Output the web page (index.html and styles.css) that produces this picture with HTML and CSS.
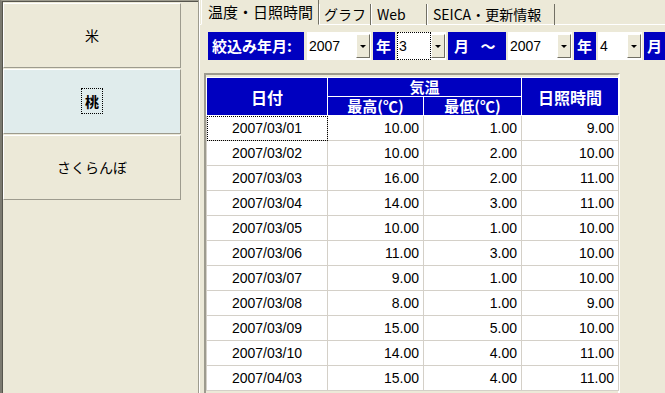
FILE: index.html
```html
<!DOCTYPE html>
<html lang="ja">
<head>
    <meta charset="utf-8">
    <link rel="stylesheet" href="styles.css">
</head>
<body>
<div class="app">
    <aside class="sidebar">
        <button class="crop">米</button>
        <button class="crop active"><span class="focus">桃</span></button>
        <button class="crop">さくらんぼ</button>
    </aside>

    <section class="main">
        <ul class="tabs">
            <li class="tab selected">温度・日照時間</li>
            <li class="tab">グラフ</li>
            <li class="tab">Web</li>
            <li class="tab">SEICA・更新情報</li>
        </ul>

        <div class="page">
            <div class="filter">
                <span class="label wide">絞込み年月:</span>
                <div class="combo w-year"><span class="value">2007</span><span class="drop"></span></div>
                <span class="label">年</span>
                <div class="combo w-month focused"><span class="value">3</span><span class="drop"></span></div>
                <span class="label tilde">月 ～</span>
                <div class="combo w-year"><span class="value">2007</span><span class="drop"></span></div>
                <span class="label">年</span>
                <div class="combo w-month2"><span class="value">4</span><span class="drop"></span></div>
                <span class="label">月</span>
            </div>

            <div class="grid-wrap">
                <table class="grid" id="weatherTable">
                    <colgroup>
                        <col class="c-date">
                        <col class="c-high">
                        <col class="c-low">
                        <col class="c-sun">
                    </colgroup>
                    <thead>
                    <tr>
                        <th rowspan="2" class="big">日付</th>
                        <th colspan="2" class="top">気温</th>
                        <th rowspan="2" class="big">日照時間</th>
                    </tr>
                    <tr>
                        <th class="sub">最高(℃)</th>
                        <th class="sub">最低(℃)</th>
                    </tr>
                    </thead>
                    <tbody>
                    <!-- rows are filled in below -->
                    </tbody>
                </table>
            </div>
        </div>
    </section>
</div>

<script>
    const rows = [
        ['2007/03/01', '10.00', '1.00', '9.00'],
        ['2007/03/02', '10.00', '2.00', '10.00'],
        ['2007/03/03', '16.00', '2.00', '11.00'],
        ['2007/03/04', '14.00', '3.00', '11.00'],
        ['2007/03/05', '10.00', '1.00', '10.00'],
        ['2007/03/06', '11.00', '3.00', '10.00'],
        ['2007/03/07', '9.00', '1.00', '10.00'],
        ['2007/03/08', '8.00', '1.00', '9.00'],
        ['2007/03/09', '15.00', '5.00', '10.00'],
        ['2007/03/10', '14.00', '4.00', '11.00'],
        ['2007/04/03', '15.00', '4.00', '11.00']
    ];

    const body = document.querySelector('#weatherTable tbody');
    rows.forEach((row, i) => {
        const tr = body.insertRow();
        row.forEach((value, j) => {
            const cell = tr.insertCell();
            cell.textContent = value;
            cell.className = j === 0 ? 'date' : 'num';
            if (i === 0 && j === 0) {
                cell.classList.add('current');
            }
        });
    });
</script>
</body>
</html>
```

FILE: styles.css
```css
body {
    margin: 0;
    width: 665px;
    height: 393px;
    overflow: hidden;
    background-color: #ece9d8;
    font-family: "Liberation Sans", "Noto Sans CJK JP", sans-serif;
    color: black;
}

.app {
    display: flex;
    height: 393px;
}

/* left list of crops */
.sidebar {
    width: 195px;
    flex: none;
    border-left: 2px solid #7b7a70;
    border-top: 1px solid #9d9b8e;
    box-shadow: inset 1px 1px 0 #56554d;
    padding: 2px 0 0 1px;
    display: flex;
    flex-direction: column;
    align-items: flex-start;
}

.crop {
    width: 178px;
    height: 65px;
    margin: 0 0 1px 0;
    padding: 0 0 2px 0;
    background-color: #ece9d8;
    border: 1px solid #fff;
    border-right-color: #9d9b8e;
    border-bottom-color: #9d9b8e;
    font-family: "Noto Sans CJK JP", sans-serif;
    font-size: 14px;
    color: black;
}

.crop.active {
    background-color: #e0ecec;
}

.focus {
    outline: 1px dotted black;
    outline-offset: 0;
    padding: 2px 3px;
    line-height: 16px;
    font-weight: bold;
}

/* right side */
.main {
    flex: 1;
    border-left: 1px solid #9d9b8e;
    box-shadow: inset 1px 0 0 #fff;
}

.tabs {
    list-style: none;
    margin: 0;
    padding: 0 0 0 2px;
    display: flex;
    align-items: flex-end;
    height: 24px;
    border-bottom: 1px solid #fff;
    font-family: "Noto Sans CJK JP", sans-serif;
    font-size: 14px;
}

.tab {
    height: 21px;
    line-height: 20px;
    padding: 0 5px;
    white-space: nowrap;
    border-left: 1px solid #fff;
    border-right: 1px solid #716f64;
    box-sizing: border-box;
    margin-bottom: -1px;
}

.tab:nth-child(1) { width: 118px; }
.tab:nth-child(2) { width: 52px; padding: 0 4px; }
.tab:nth-child(3) { width: 56px; }
.tab:nth-child(4) { width: 128px; }

.tab.selected {
    height: 25px;
    line-height: 24px;
    font-size: 15px;
    padding-left: 6px;
    background-color: #ece9d8;
    border-bottom: 1px solid #ece9d8;
}

.page {
    padding: 7px 0 0 9px;
}

.filter {
    display: flex;
    align-items: stretch;
    height: 28px;
    gap: 2px;
}

.label {
    background-color: #0000c0;
    color: white;
    font-family: "Noto Sans CJK JP", sans-serif;
    font-weight: bold;
    font-size: 15px;
    line-height: 27px;
    padding: 0 3px;
    width: 22px;
    box-sizing: border-box;
    white-space: nowrap;
}

.label.wide {
    width: 96px;
    padding-left: 4px;
    margin-right: 1px;
}

.label.tilde {
    width: 58px;
    padding-left: 6px;
    word-spacing: 8px;
}

.combo {
    display: flex;
    align-items: center;
    background-color: white;
    padding-right: 1px;
    box-sizing: border-box;
}

.combo.w-year { width: 64px; }
.combo.w-month { width: 49px; }
.combo.w-month2 { width: 44px; }

.combo.focused .value {
    outline: 1px dotted black;
    outline-offset: -1px;
}

.value {
    flex: 1;
    align-self: stretch;
    font-size: 14px;
    line-height: 28px;
    padding-left: 2px;
}

.drop {
    width: 14px;
    height: 24px;
    background-color: #ece9d8;
    border: 1px solid #fff;
    border-right-color: #716f64;
    border-bottom-color: #716f64;
    box-sizing: border-box;
    position: relative;
}

.drop::after {
    content: "";
    position: absolute;
    left: 3px;
    top: 10px;
    border-left: 3px solid transparent;
    border-right: 3px solid transparent;
    border-top: 3px solid black;
}

/* data grid */
.grid-wrap {
    margin: 13px 0 0 -4px;
    width: 412px;
    height: 330px;
    border: 2px solid;
    border-color: #9d9b8e #fff #fff #9d9b8e;
    padding: 2px 0 0 0;
    background-color: #ece9d8;
}

.grid {
    border-collapse: collapse;
    table-layout: fixed;
    width: 412px;
    font-size: 14px;
}

.c-date { width: 121px; }
.c-high { width: 96px; }
.c-low { width: 98px; }
.c-sun { width: 97px; }

.grid th {
    background-color: #0000c0;
    color: white;
    font-family: "Noto Sans CJK JP", sans-serif;
    font-weight: bold;
    border: 1px solid white;
    padding: 0;
    height: 18px;
    line-height: 18px;
}

.grid th.big {
    font-size: 16px;
}

.grid th.top,
.grid th.sub {
    font-size: 15px;
}

.grid td {
    background-color: white;
    border: 1px solid #d4d0c8;
    height: 24px;
    padding: 0 4px;
    line-height: 24px;
}

.grid td.date {
    text-align: center;
}

.grid td.num {
    text-align: right;
}

.grid td.current {
    outline: 1px dotted black;
    outline-offset: -1px;
}
```
